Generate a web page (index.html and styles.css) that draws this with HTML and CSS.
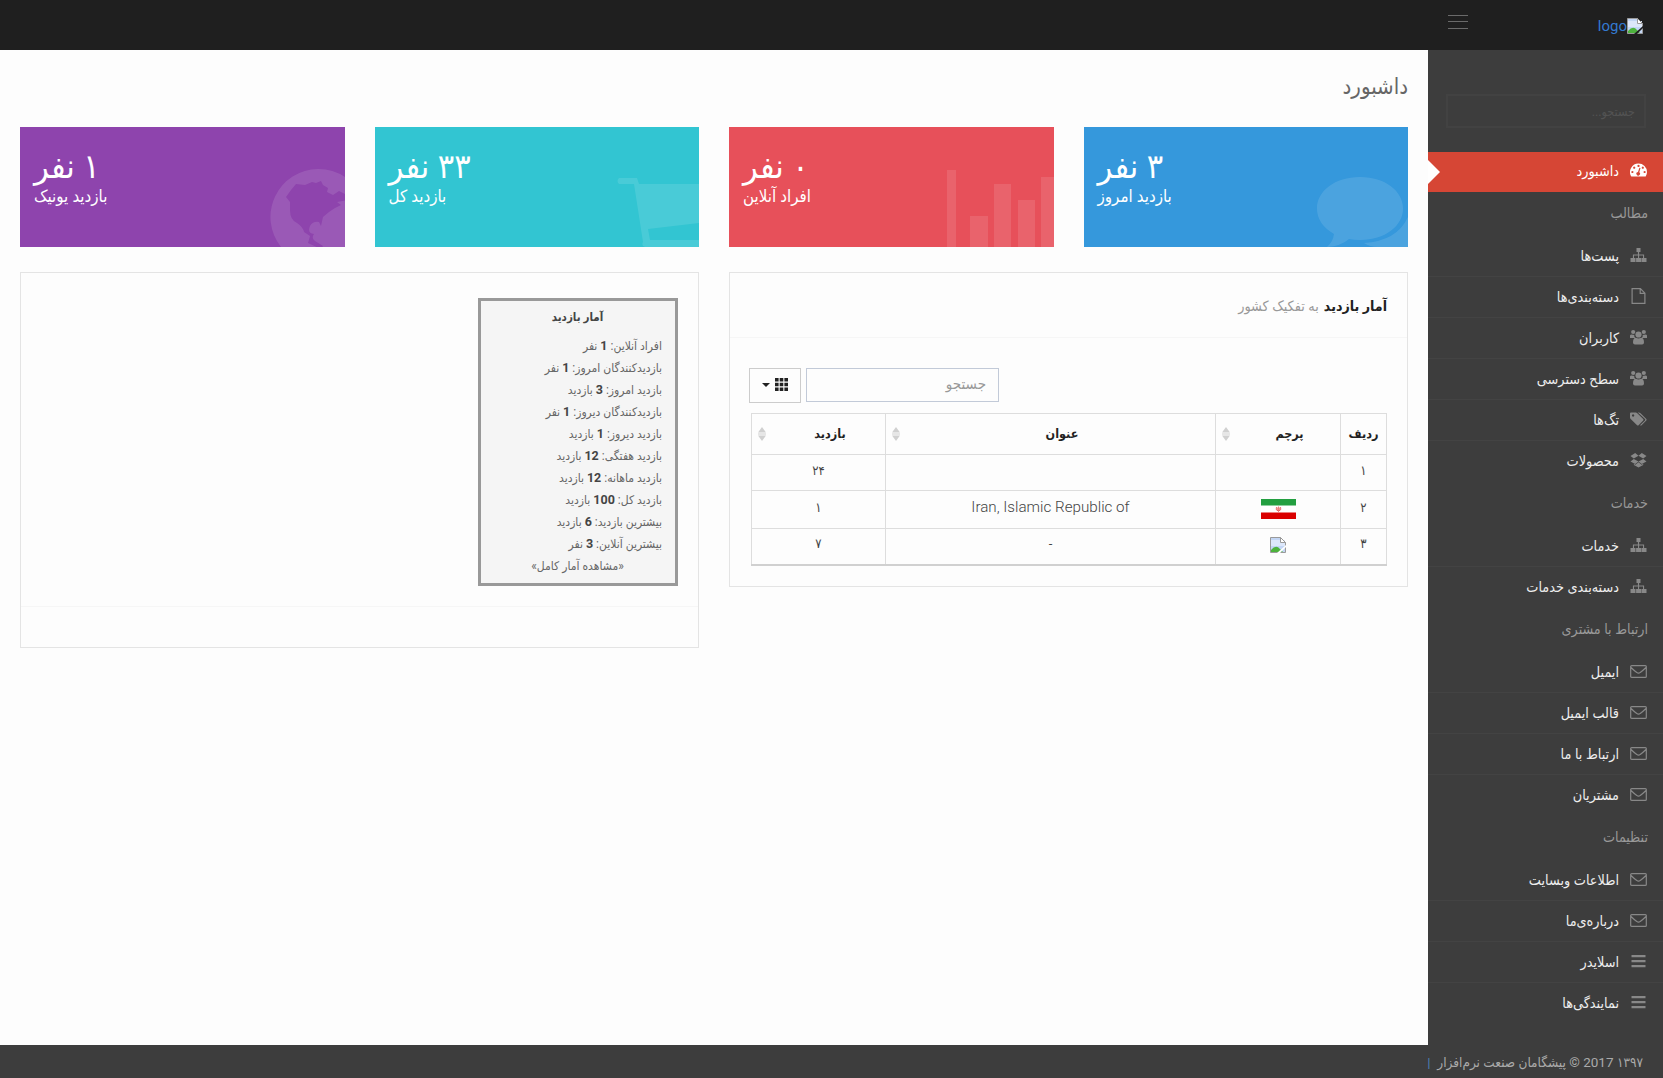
FILE: index.html
```html
<!DOCTYPE html>
<html lang="fa" dir="rtl">
<head>
<meta charset="utf-8">
<title>داشبورد</title>
<link rel="stylesheet" href="styles.css">
</head>
<body>
<svg class="defs" aria-hidden="true">
  <symbol id="broken" viewBox="0 0 16 16"><path d="M.5.5h10l5 5v10H.5z" fill="#c3d6f5" stroke="#9a9a9a"/><path d="M1 3h14v6H1z" fill="#dce7fa"/><path d="M1 15v-2q5-6 9-1l3 3z" fill="#4db33d"/><path d="M10.500.5v5h5z" fill="#fff" stroke="#9a9a9a"/><path d="M16 8v2l-6 6H7z" fill="var(--tear,#fff)"/></symbol>
  <symbol id="sitemap" viewBox="0 0 16 16"><path d="M6 1h4v4H8.600v2.500h5V11H16v4h-5v-4h1.500V8.600H8.600V11h2v4h-5v-4h1.900V8.600H3.500V11H5v4H0v-4h2.400V7.500h5V5H6z"/></symbol>
  <symbol id="file" viewBox="0 0 16 16"><path d="M1.600.6h8.300l4.500 4.600v10.200H1.600zM9.700.8v4.600h4.600" fill="none" stroke="currentColor" stroke-width="1.200"/></symbol>
  <symbol id="group" viewBox="0 0 17 16"><circle cx="3.200" cy="3" r="2.100"/><circle cx="13.800" cy="3" r="2.100"/><circle cx="8.500" cy="5.500" r="3.100"/><path d="M0 9V6.500Q.3 5.500 1.500 5.500l2.800.4Q4 8 5.300 9H2Q0 9.200 0 9zM17 9V6.500q-.3-1-1.500-1l-2.800.4q.3 2.100-1 3.100H15q2 .2 2 0zM3 13.500q0-4.500 2.800-4.700 2.700 1.600 5.400 0 2.800.2 2.800 4.700 0 2-2 2H5q-2 0-2-2z"/></symbol>
  <symbol id="tags" viewBox="0 0 17 16"><path fill-rule="evenodd" d="M0 2.500Q0 1.500 1 1.500h4.800q.8 0 1.500.7l5.900 5.900q.7.8 0 1.500l-4.600 4.600q-.8.7-1.500 0L.7 7.900Q0 7.200 0 6.500zM3.100 3.300a1.200 1.200 0 1 0 .01 0z"/><path d="M7.800 1.500h1q1 0 1.700.7l5.800 5.900q.7.800 0 1.500l-4.700 4.600q-.7.700-1.600.1l5-4.800q.7-.7 0-1.400z"/></symbol>
  <symbol id="dropbox" viewBox="0 0 16 16"><path d="M4.700 1 8 3.700 3.300 6.500 0 4zM11.300 1 16 4l-3.300 2.500L8 3.700zM3.300 6.900 8 9.500l-3.300 2.600L0 9.400zM12.700 6.900 16 9.400l-4.700 2.700L8 9.500zM8 10.200l3.200 2.600 1.500-1v1.100L8 15.600l-4.600-2.700v-1.100l1.400 1z"/></symbol>
  <symbol id="mail" viewBox="0 0 17 16"><path d="M1.700 2.600h13.600q1 0 1 1v9.800q0 1-1 1H1.700q-1 0-1-1V3.600q0-1 1-1zM1 4.500q3 3 5.800 4.900 1.700 1.400 3.400 0Q13 7.500 16 4.500" fill="none" stroke="currentColor" stroke-width="1.200"/></symbol>
  <symbol id="bars" viewBox="0 0 16 16"><path d="M1 2h14v2.200H1zM1 7h14v2.200H1zM1 12h14v2.200H1z"/></symbol>
  <symbol id="gauge" viewBox="0 0 17 16"><path fill-rule="evenodd" d="M8.500 1.500A8.500 8.500 0 0 1 17 10q0 2.400-1.300 4.500H1.300A8.500 8.500 0 0 1 8.500 1.500zM8.500 2.800a1.100 1.100 0 1 0 .01 0zM4.200 4.600a1.100 1.100 0 1 0 .01 0zM12.800 4.600a1.100 1.100 0 1 0 .01 0zM2.400 8.900a1.100 1.100 0 1 0 .01 0zM14.600 8.900a1.100 1.100 0 1 0 .01 0zM9.400 5.700 8 9.900a1.800 1.800 0 1 0 1.300.4l1.200-4.300z"/></symbol>
  <symbol id="sort" viewBox="0 0 8 14"><path d="M4 0 8 5.600H0zM4 14 0 8.400h8zM0 6.500h8v1H0z"/></symbol>
</svg>

<header class="topbar">
  <a class="logo" href="#"><svg class="img-icon"><use href="#broken"/></svg><span>logo</span></a>
  <span class="toggler"></span>
</header>

<div class="shell">
  <nav class="sidebar">
    <div class="side-search"><span>جستجو...</span></div>
    <a class="item active"><svg><use href="#gauge"/></svg><span>داشبورد</span></a>
    <h3><span>مطالب</span></h3>
    <a class="item"><svg><use href="#sitemap"/></svg><span>پست‌ها</span></a>
    <a class="item"><svg><use href="#file"/></svg><span>دسته‌بندی‌ها</span></a>
    <a class="item"><svg><use href="#group"/></svg><span>کاربران</span></a>
    <a class="item"><svg><use href="#group"/></svg><span>سطح دسترسی</span></a>
    <a class="item"><svg><use href="#tags"/></svg><span>تگ‌ها</span></a>
    <a class="item last"><svg><use href="#dropbox"/></svg><span>محصولات</span></a>
    <h3><span>خدمات</span></h3>
    <a class="item"><svg><use href="#sitemap"/></svg><span>خدمات</span></a>
    <a class="item last"><svg><use href="#sitemap"/></svg><span>دسته‌بندی خدمات</span></a>
    <h3><span>ارتباط با مشتری</span></h3>
    <a class="item"><svg><use href="#mail"/></svg><span>ایمیل</span></a>
    <a class="item"><svg><use href="#mail"/></svg><span>قالب ایمیل</span></a>
    <a class="item"><svg><use href="#mail"/></svg><span>ارتباط با ما</span></a>
    <a class="item last"><svg><use href="#mail"/></svg><span>مشتریان</span></a>
    <h3><span>تنظیمات</span></h3>
    <a class="item"><svg><use href="#mail"/></svg><span>اطلاعات وبسایت</span></a>
    <a class="item"><svg><use href="#mail"/></svg><span>درباره‌ی‌ما</span></a>
    <a class="item"><svg><use href="#bars"/></svg><span>اسلایدر</span></a>
    <a class="item last"><svg><use href="#bars"/></svg><span>نمایندگی‌ها</span></a>
  </nav>

  <main class="content">
    <h1><span>داشبورد</span></h1>
    <section class="cards">
      <div class="card blue">
        <svg class="art" viewBox="0 0 96 80"><path d="M48 10c25 0 43 14 43 31.500S73 73 48 73q-6 0-11-1-8 7-22 8 6-5 7-13Q5 57 5 41.500C5 24 23 10 48 10z"/><path d="M96 60v20H66q-8 0-14-4 33-2 44-26z"/></svg>
        <strong>۳ نفر</strong><span>بازدید امروز</span>
      </div>
      <div class="card red">
        <svg class="art" viewBox="0 0 108 80"><path d="M1 3h9v77H1zM24 49h18v31H24zM48 17h17v63H48zM72 33h17v47H72zM95 10h13v70H95z"/></svg>
        <strong>۰ نفر</strong><span>افراد آنلاین</span>
      </div>
      <div class="card teal">
        <svg class="art" viewBox="0 0 84 80"><path d="M4 11h18l2 6h60v39l-51 6 2 11h49v7H30q-4-1-2-5l-9-58H4q-3-3 0-6z"/></svg>
        <strong>۳۳ نفر</strong><span>بازدید کل</span>
      </div>
      <div class="card purple">
        <svg class="art" viewBox="0 0 80 80"><path fill-rule="evenodd" d="M53 2a48 48 0 0 1 27 8v70H16A48 48 0 0 1 53 2zM80 27l-6-3-6 4-6-3 1-4-5-3-2-4-5 2-4-1-7 3-9-1-5 6-5 7 4 5v8q0 10 7 13 6 4 7 9l6 4-2 7 13 6 2-3-8-5q-4-3-1-7-7-1-4-8 3-5 9-4l2 4 2-9 6-5 6-4 6-3-4-3 10-2z"/></svg>
        <strong>۱ نفر</strong><span>بازدید یونیک</span>
      </div>
    </section>

    <section class="panels">
      <div class="panel">
        <header class="panel-head"><b>آمار بازدید</b><small>به تفکیک کشور</small></header>
        <div class="tools">
          <div class="find"><span>جستجو</span></div>
          <div class="columns"><svg viewBox="0 0 13 13"><path d="M0 0h3.600v3.500H0zM4.700 0h3.600v3.500H4.700zM9.400 0H13v3.500H9.400zM0 4.700h3.600v3.600H0zM4.700 4.700h3.600v3.600H4.700zM9.400 4.700H13v3.600H9.400zM0 9.500h3.600V13H0zM4.700 9.500h3.600V13H4.700zM9.400 9.500H13V13H9.400z"/></svg><i class="caret"></i></div>
        </div>
        <table>
          <colgroup><col class="c-row"><col class="c-flag"><col class="c-title"><col class="c-visit"></colgroup>
          <tr class="head"><th>ردیف</th><th class="sortable"><div><span>پرچم</span><svg><use href="#sort"/></svg></div></th><th class="sortable"><div><span>عنوان</span><svg><use href="#sort"/></svg></div></th><th class="sortable"><div><span>بازدید</span><svg><use href="#sort"/></svg></div></th></tr>
          <tr class="r1"><td>۱</td><td></td><td></td><td>۲۴</td></tr>
          <tr class="r2"><td>۲</td><td><svg class="flag" viewBox="0 0 35 20"><path fill="#fff" d="M0 0h35v20H0z"/><path fill="#239f40" d="M0 0h35v6.500H0z"/><path fill="#da0000" d="M0 13.500h35V20H0z"/><path d="M15.500 8q-1.500 3 1.700 4M19.500 8q1.500 3-1.700 4M17.500 7.500v5.300M16.300 8.500v3M18.700 8.500v3" fill="none" stroke="#da0000" stroke-width=".5"/></svg></td><td class="latin">Iran, Islamic Republic of</td><td>۱</td></tr>
          <tr class="r3"><td>۳</td><td><svg class="img-icon"><use href="#broken"/></svg></td><td>-</td><td>۷</td></tr>
        </table>
      </div>

      <div class="panel second">
        <div class="stats">
          <h4>آمار بازدید</h4>
          <p>افراد آنلاین: <b>1</b> نفر</p>
          <p>بازدیدکنندگان امروز: <b>1</b> نفر</p>
          <p>بازدید امروز: <b>3</b> بازدید</p>
          <p>بازدیدکنندگان دیروز: <b>1</b> نفر</p>
          <p>بازدید دیروز: <b>1</b> بازدید</p>
          <p>بازدید هفتگی: <b>12</b> بازدید</p>
          <p>بازدید ماهانه: <b>12</b> بازدید</p>
          <p>بازدید کل: <b>100</b> بازدید</p>
          <p>بیشترین بازدید: <b>6</b> بازدید</p>
          <p>بیشترین آنلاین: <b>3</b> نفر</p>
          <p class="more">«مشاهده آمار کامل»</p>
        </div>
        <div class="rule"></div>
      </div>
    </section>
  </main>
</div>

<footer class="footer"><span>۱۳۹۷ 2017 © پیشگامان صنعت نرم‌افزار &nbsp;<i>|</i></span></footer>
</body>
</html>
```
FILE: styles.css
```css
* { box-sizing: border-box; }
body { margin: 0; width: 1663px; height: 1078px; overflow: hidden; background: #3d3d3d; font-family: Roboto, "DejaVu Sans Condensed", "DejaVu Sans", sans-serif; font-size: 13px; color: #333; display: flex; flex-direction: column; }
h1, h3, h4, p { margin: 0; font-weight: 400; }
svg { fill: currentColor; flex: none; }
.defs { display: none; }

.topbar { height: 50px; flex: none; background: #1f1f1f; display: flex; }
.logo { width: 235px; padding: 18px 20px 0 0; display: flex; align-items: flex-start; color: #337ad0; font-size: 15px; font-weight: 400; line-height: 17px; text-decoration: none; --tear: #1f1f1f; }
.img-icon { width: 16px; height: 16px; }
.toggler { width: 20px; height: 14px; margin: 15px -40px 0 0; border-top: 1px solid #6a6a6a; border-bottom: 1px solid #6a6a6a; background: linear-gradient(#6a6a6a, #6a6a6a) 0 5px / 100% 1px no-repeat; }

.shell { height: 995px; flex: none; display: flex; }
.sidebar { width: 235px; flex: none; background: #3d3d3d; padding-top: 44px; display: flex; flex-direction: column; }
.side-search { height: 34px; margin: 0 17px 24px 18px; border: 2px solid #424242; padding: 0 9px; display: flex; align-items: center; color: #535353; font-size: 12.500px; }
.item { height: 41px; flex: none; border-bottom: 1px solid #434343; padding: 0 16px 1px 0; display: flex; align-items: center; gap: 11px; color: #eee; font-size: 14.300px; white-space: nowrap; }
.item svg { width: 17px; height: 16px; margin-bottom: 1px; color: #888; }
.item.last { border-color: transparent; }
.item.active { height: 40px; border: 0; padding-bottom: 3px; background: #d64635; color: #fff; position: relative; }
.item.active svg { color: #fff; }
.item.active::after { content: ""; position: absolute; left: 0; top: 8px; border: 12px solid transparent; border-right-width: 0; border-left-color: #fff; }
.sidebar h3 { height: 44px; flex: none; padding: 0 15px 2px 0; display: flex; align-items: center; color: #999; font-size: 14.200px; }

.content { flex: 1; min-width: 0; background: #fdfdfd; padding: 0 20px; display: flex; flex-direction: column; }
.content h1 { height: 77px; padding-bottom: 5px; display: flex; align-items: center; font-size: 22px; color: #666; font-weight: 300; }
.cards { display: grid; grid-template-columns: repeat(4, 1fr); gap: 30px; }
.card { height: 120px; position: relative; overflow: hidden; color: #fff; padding: 18px 14px 0; display: flex; flex-direction: column; align-items: flex-end; }
.card strong { font-size: 34px; font-weight: 400; line-height: 42px; height: 40px; }
.card span { font-size: 16.800px; line-height: 23px; }
.art { position: absolute; right: 0; bottom: 0; height: 80px; opacity: .11; }
.blue { background: #3598dc; }
.red { background: #e7505a; }
.teal { background: #32c5d2; }
.purple { background: #8e44ad; }

.panels { margin-top: 25px; display: grid; grid-template-columns: minmax(0, 1fr) minmax(0, 1fr); gap: 30px; align-items: start; }
.panel { height: 315px; border: 1px solid #e4e4e4; padding: 0 20px 0 21px; }
.panel-head { height: 65px; margin-right: -20px; margin-left: -21px; padding: 2px 20px 0; border-bottom: 1px solid #f6f6f6; display: flex; align-items: center; gap: 5px; }
.panel-head b { color: #222; font-size: 14.100px; }
.panel-head small { color: #999; font-size: 14.300px; }
.tools { margin: 30px 0 10px -2px; height: 35px; display: flex; justify-content: flex-end; gap: 5px; }
.find { width: 193px; height: 34px; border: 1px solid #c2cad8; padding: 0 12px 3px; display: flex; align-items: center; color: #999; font-size: 15px; }
.columns { width: 52px; height: 35px; border: 1px solid #ccc; display: flex; align-items: center; justify-content: center; gap: 5px; color: #222; padding-bottom: 3px; }
.columns svg { width: 13px; height: 13px; }
.caret { border: 4px solid transparent; border-top-color: #222; border-bottom: 0; margin-top: 2px; }
table { width: 100%; border-collapse: collapse; table-layout: fixed; border: 1px solid #d8d8d8; border-bottom: 2px solid #d0d0d0; }
.c-row { width: 46px; }
.c-flag { width: 125px; }
.c-visit { width: 134px; }
th, td { border: 1px solid #ddd; padding: 0; text-align: center; color: #222; font-weight: 400; line-height: 16px; }
th { font-size: 12.500px; font-weight: 700; }
.head { height: 41px; }
.r1 { height: 36px; }
.r2 { height: 38px; }
.r3 { height: 36px; }
td { padding-bottom: 4px; color: #444; }
.sortable div { display: flex; align-items: center; padding-left: 6px; }
.sortable span { flex: 1; text-align: center; padding-left: 9px; }
.sortable svg { width: 8px; height: 14px; color: #d0d0d0; }
.latin { font-size: 15.200px; font-weight: 300; padding-bottom: 6px; }
.flag { width: 35px; height: 20px; display: block; margin: 3px auto 0; }
td .img-icon { vertical-align: middle; }

.second { height: 376px; padding: 25px 20px 0; }
.stats { width: 200px; height: 288px; border: 3px solid #999; background: #f5f5f5; padding: 5px 13px 0 12px; color: #666; font-size: 12px; }
.stats h4 { font-size: 11.500px; font-weight: 700; text-align: center; line-height: 22px; height: 29px; color: #444; }
.stats p { height: 22px; line-height: 22px; white-space: nowrap; }
.stats b { font-size: 12.500px; color: #444; }
.stats .more { text-align: center; }
.rule { margin: 20px -20px 0; border-top: 1px solid #f6f6f6; }

.footer { flex: 1; background: #3d3d3d; color: #aaa; padding: 0 20px; display: flex; align-items: center; font-size: 13.500px; }
.footer i { color: #4b7fb5; font-style: normal; }
```
